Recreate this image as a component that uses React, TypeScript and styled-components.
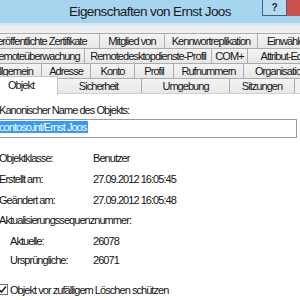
import React from 'react'
import styled, { createGlobalStyle } from 'styled-components'

const GlobalStyle = createGlobalStyle`
  html, body {
    margin: 0;
    padding: 0;
  }
  body {
    width: 300px;
    height: 300px;
    overflow: hidden;
    background: #f0f0f0;
    font-family: 'Liberation Sans', Arial, sans-serif;
    color: #111;
  }
`

type TabDef = { label: string; w: number; active?: boolean }
type RowDef = { offset: number; tabs: TabDef[] }

const tabRows: RowDef[] = [
  {
    offset: -22,
    tabs: [
      { label: 'Veröffentlichte Zertifikate', w: 122 },
      { label: 'Mitglied von', w: 66 },
      { label: 'Kennwortreplikation', w: 94 },
      { label: 'Einwählen', w: 62 },
    ],
  },
  {
    offset: -14,
    tabs: [
      { label: 'Remoteüberwachung', w: 99 },
      { label: 'Remotedesktopdienste-Profil', w: 128 },
      { label: 'COM+', w: 37 },
      { label: 'Attribut-Editor', w: 80 },
    ],
  },
  {
    offset: -16,
    tabs: [
      { label: 'Allgemein', w: 58 },
      { label: 'Adresse', w: 50 },
      { label: 'Konto', w: 45 },
      { label: 'Profil', w: 40 },
      { label: 'Rufnummern', w: 71 },
      { label: 'Organisation', w: 75 },
    ],
  },
  {
    offset: -14,
    tabs: [
      { label: 'Objekt', w: 70, active: true },
      { label: 'Sicherheit', w: 87 },
      { label: 'Umgebung', w: 89 },
      { label: 'Sitzungen', w: 66 },
    ],
  },
]

const Window = styled.div`
  width: 300px;
  height: 300px;
  overflow: hidden;
  display: flex;
  flex-direction: column;
  background: #f0f0f0;
`

const TitleBar = styled.div`
  flex-shrink: 0;
  height: 23px;
  display: grid;
  grid-template-columns: 1fr auto 1fr;
  background: #a7d4ef;
  border-bottom: 3px solid #d3e9f7;
`

const TitleText = styled.div`
  grid-column: 2;
  font-size: 13.5px;
  letter-spacing: -0.6px;
  line-height: 24px;
  color: #1a1a1a;
  white-space: nowrap;
`

const Controls = styled.div`
  grid-column: 3;
  display: flex;
  justify-content: flex-end;
  margin-right: -32px;
`

const HelpButton = styled.div`
  width: 25px;
  height: 16px;
  box-sizing: border-box;
  border: 1px solid #3a6480;
  border-top: none;
  background: #b3daf1;
  font-size: 10px;
  font-weight: bold;
  line-height: 15px;
  text-align: center;
  color: #1c2f3c;
`

const CloseButton = styled.div`
  width: 45px;
  height: 16px;
  background: #c9524c;
`

const TabStrip = styled.div`
  flex-shrink: 0;
  margin-top: 7px;
  display: flex;
  flex-direction: column;
`

const TabRow = styled.div<{ $offset: number }>`
  display: flex;
  height: 15px;
  margin-left: ${p => p.$offset}px;
`

const Tab = styled.div<{ $w: number; $active?: boolean }>`
  flex: 0 0 ${p => p.$w}px;
  box-sizing: border-box;
  height: 16px;
  margin-right: -1px;
  border: 1px solid #acacac;
  background: linear-gradient(#f4f4f4, #e7e7e7);
  font-size: 11px;
  letter-spacing: -0.95px;
  line-height: 14px;
  text-align: center;
  white-space: nowrap;
  overflow: hidden;
  color: #151515;

  ${p =>
    p.$active &&
    `
    position: relative;
    z-index: 2;
    flex-basis: ${p.$w + 4}px;
    height: 19px;
    margin: -2px -3px 0 -2px;
    background: #fff;
    border-bottom: none;
    border-color: #c4c4c4;
    line-height: 17px;
  `}
`

const Page = styled.div`
  flex: 1;
  margin-left: -1px;
  padding-top: 9px;
  background: #fff;
  border-top: 1px solid #d0d0d0;
  font-size: 11px;
  letter-spacing: -0.95px;
`

const Caption = styled.div<{ $top?: number; $indent?: number }>`
  line-height: 14px;
  margin-top: ${p => p.$top || 0}px;
  padding-left: ${p => p.$indent || 0}px;
  white-space: nowrap;
`

const NameBox = styled.div`
  height: 19px;
  box-sizing: border-box;
  margin: 2px 3px 0 -4px;
  padding: 1px 0 0 3px;
  border: 1px solid #8d9bab;
  background: #fff;
`

const Selection = styled.span`
  display: inline-block;
  height: 12px;
  line-height: 12px;
  padding-right: 2px;
  background: #3399ff;
  color: #fff;
  white-space: nowrap;
`

const Field = styled.div<{ $top?: number; $indent?: number }>`
  display: grid;
  grid-template-columns: 94px 1fr;
  height: 21px;
  line-height: 21px;
  margin-top: ${p => p.$top || 0}px;
  white-space: nowrap;

  & > span:first-child {
    padding-left: ${p => p.$indent || 0}px;
  }
`

const CheckRow = styled.label`
  display: flex;
  align-items: center;
  gap: 2px;
  height: 21px;
  margin: 8px 0 0 -2px;
  white-space: nowrap;
`

const CheckBox = styled.span`
  width: 11px;
  height: 11px;
  box-sizing: border-box;
  border: 1px solid #6f6f6f;
  background: #fff;
  display: flex;
  align-items: center;
  justify-content: center;
`

export default function App() {
  return (
    <Window>
      <GlobalStyle />
      <TitleBar>
        <TitleText>Eigenschaften von Ernst Joos</TitleText>
        <Controls>
          <HelpButton>?</HelpButton>
          <CloseButton />
        </Controls>
      </TitleBar>

      <TabStrip>
        {tabRows.map((row, i) => (
          <TabRow key={i} $offset={row.offset}>
            {row.tabs.map(t => (
              <Tab key={t.label} $w={t.w} $active={t.active}>
                {t.label}
              </Tab>
            ))}
          </TabRow>
        ))}
      </TabStrip>

      <Page>
        <Caption>Kanonischer Name des Objekts:</Caption>
        <NameBox>
          <Selection>contoso.int/Ernst Joos</Selection>
        </NameBox>

        <Field $top={10}>
          <span>Objektklasse:</span>
          <span>Benutzer</span>
        </Field>
        <Field>
          <span>Erstellt am:</span>
          <span>27.09.2012 16:05:45</span>
        </Field>
        <Field>
          <span>Geändert am:</span>
          <span>27.09.2012 16:05:48</span>
        </Field>
        <Field $top={-1}>
          <span>Aktualisierungssequenznummer:</span>
        </Field>
        <Field $indent={11}>
          <span>Aktuelle:</span>
          <span>26078</span>
        </Field>
        <Field $top={-2} $indent={11}>
          <span>Ursprüngliche:</span>
          <span>26071</span>
        </Field>

        <CheckRow>
          <CheckBox>
            <svg width="9" height="9" viewBox="0 0 9 9">
              <path d="M1 4.6 L3.4 7 L8 1.6" fill="none" stroke="#222" strokeWidth="1.6" />
            </svg>
          </CheckBox>
          Objekt vor zufälligem Löschen schützen
        </CheckRow>
      </Page>
    </Window>
  )
}
